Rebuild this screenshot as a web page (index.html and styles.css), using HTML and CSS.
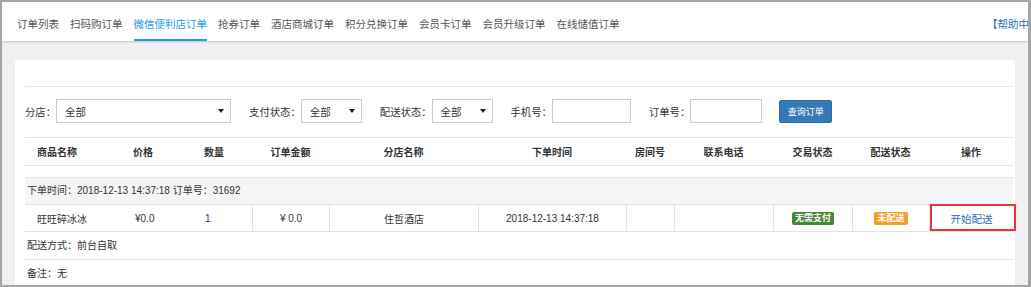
FILE: index.html
```html
<!DOCTYPE html>
<html lang="zh-CN">
<head>
  <meta charset="UTF-8">
  <title>微信便利店订单</title>
  <link rel="stylesheet" href="styles.css">
</head>
<body>
  <div class="frame">
    <!-- 顶部导航 -->
    <div class="nav">
      <a class="nav-item">订单列表</a>
      <a class="nav-item">扫码购订单</a>
      <a class="nav-item active">微信便利店订单</a>
      <a class="nav-item">抢券订单</a>
      <a class="nav-item">酒店商城订单</a>
      <a class="nav-item">积分兑换订单</a>
      <a class="nav-item">会员卡订单</a>
      <a class="nav-item">会员升级订单</a>
      <a class="nav-item">在线储值订单</a>
      <a class="nav-help">【帮助中心】</a>
    </div>

    <div class="main">
      <div class="card">
        <div class="card-head"></div>

        <!-- 筛选条件 -->
        <div class="filters">
          <span class="label">分店：</span>
          <div class="select wide">全部<i class="caret"></i></div>
          <span class="label">支付状态：</span>
          <div class="select">全部<i class="caret"></i></div>
          <span class="label">配送状态：</span>
          <div class="select">全部<i class="caret"></i></div>
          <span class="label">手机号：</span>
          <div class="input phone"></div>
          <span class="label">订单号：</span>
          <div class="input"></div>
          <button class="btn">查询订单</button>
        </div>

        <!-- 表头 -->
        <div class="thead">
          <div class="c1">商品名称</div>
          <div class="c2">价格</div>
          <div class="c3">数量</div>
          <div>订单金额</div>
          <div>分店名称</div>
          <div>下单时间</div>
          <div>房间号</div>
          <div>联系电话</div>
          <div>交易状态</div>
          <div>配送状态</div>
          <div>操作</div>
        </div>

        <!-- 订单 -->
        <div class="order">
          <div class="order-info">下单时间：2018-12-13 14:37:18 订单号：31692</div>
          <div class="order-row">
            <div class="c1">旺旺碎冰冰</div>
            <div class="c2">¥0.0</div>
            <div class="c3">1</div>
            <div class="cell">¥ 0.0</div>
            <div class="cell">住哲酒店</div>
            <div class="cell">2018-12-13 14:37:18</div>
            <div class="cell"></div>
            <div class="cell"></div>
            <div class="cell"><span class="badge green">无需支付</span></div>
            <div class="cell"><span class="badge orange">未配送</span></div>
            <div class="cell op"><a class="link">开始配送</a></div>
          </div>
          <div class="order-line">配送方式：前台自取</div>
          <div class="order-line">备注：无</div>
        </div>
      </div>
    </div>
  </div>
</body>
</html>
```

FILE: styles.css
```css
* {
  box-sizing: border-box;
}
body {
  margin: 0;
  font-family: "Liberation Sans", "Noto Sans CJK SC", sans-serif;
  color: #333;
}
.frame {
  width: 1031px;
  height: 287px;
  border: 2px solid #a6a6a6;
  border-right-width: 3px;
  background-color: #f0f0f0;
  overflow: hidden;
}

/* 导航 */
.nav {
  display: flex;
  height: 39px;
  padding-left: 15px;
  background-color: #fff;
  box-shadow: 0 1px 2px rgba(0, 0, 0, 0.18);
  overflow: hidden;
  position: relative;
}
.nav-item {
  flex-shrink: 0;
  margin-right: 11px;
  padding-top: 12px;
  line-height: 20px;
  font-size: 10.5px;
  color: #555;
  border-bottom: 2px solid transparent;
}
.nav-item.active {
  color: #1e9be3;
  border-bottom-color: #1e9be3;
}
.nav-help {
  flex-shrink: 0;
  margin-left: auto;
  margin-right: -22px;
  padding-top: 12px;
  line-height: 20px;
  font-size: 10.5px;
  color: #2a6fc0;
}

.main {
  padding: 19px 13px 0;
}
.card {
  background-color: #fff;
  padding: 0 2px 0 10px;
  height: 230px;
}
.card-head {
  height: 27px;
  border-bottom: 1px solid #e6e6e6;
}

/* 筛选 */
.filters {
  display: flex;
  align-items: center;
  padding: 12px 0 14px;
  font-size: 10.35px;
}
.label {
  margin-left: 18px;
}
.label:first-child {
  margin-left: 0;
}
.select {
  display: flex;
  align-items: center;
  justify-content: space-between;
  width: 61px;
  height: 24px;
  padding: 0 6px 0 8px;
  border: 1px solid #ccc;
  color: #333;
  font-size: 10.5px;
}
.select.wide {
  width: 175px;
}
.caret {
  width: 0;
  height: 0;
  border-left: 3px solid transparent;
  border-right: 3px solid transparent;
  border-top: 4px solid #222;
}
.input {
  width: 72px;
  height: 24px;
  border: 1px solid #ccc;
}
.input.phone {
  width: 79px;
}
.btn {
  margin-left: 17px;
  width: 53px;
  height: 23px;
  padding: 0;
  border: 1px solid #2e6da4;
  border-radius: 2px;
  background-color: #337ab7;
  color: #fff;
  font-family: inherit;
  font-size: 9px;
}

/* 表格 */
.thead,
.order-row {
  display: grid;
  grid-template-columns: 68px 102px 57px 77px 149px 148px 48px 99px 79px 77px 84px;
  font-size: 10px;
}
.thead {
  height: 29px;
  border-top: 1px solid #e3e3e3;
  border-bottom: 1px solid #e3e3e3;
  font-weight: bold;
  align-items: center;
  text-align: center;
}
.thead .c1 { text-align: left; padding-left: 12px; }
.thead .c2 { text-align: left; padding-left: 40px; }
.thead .c3 { text-align: left; padding-left: 9px; }

.order {
  margin-top: 11px;
  border-top: 1px solid #e3e3e3;
  font-size: 10px;
}
.order-info {
  height: 27px;
  line-height: 26px;
  padding-left: 2px;
  background-color: #f5f5f5;
  border-bottom: 1px solid #e3e3e3;
}
.order-row {
  height: 27px;
  border-bottom: 1px solid #e3e3e3;
  align-items: stretch;
}
.order-row > div {
  display: flex;
  align-items: center;
}
.order-row .c1 { padding-left: 12px; }
.order-row .c2 { padding-left: 42px; }
.order-row .c3 { padding-left: 10px; }
.order-row .cell {
  justify-content: center;
  border-left: 1px solid #e3e3e3;
}
.badge {
  padding: 0 3px;
  line-height: 13px;
  font-size: 9px;
  font-weight: bold;
  color: #fff;
  border-radius: 2px;
}
.badge.green {
  background-color: #45883c;
}
.badge.orange {
  background-color: #f0a02a;
}
.op {
  position: relative;
}
.op::after {
  content: "";
  position: absolute;
  left: 0;
  right: -3px;
  top: -1px;
  bottom: 0;
  border: 2px solid #ec3434;
}
.link {
  color: #2f6db5;
  font-size: 10.5px;
}
.order-line {
  height: 28px;
  line-height: 27px;
  padding-left: 2px;
  border-bottom: 1px solid #e3e3e3;
}
```
